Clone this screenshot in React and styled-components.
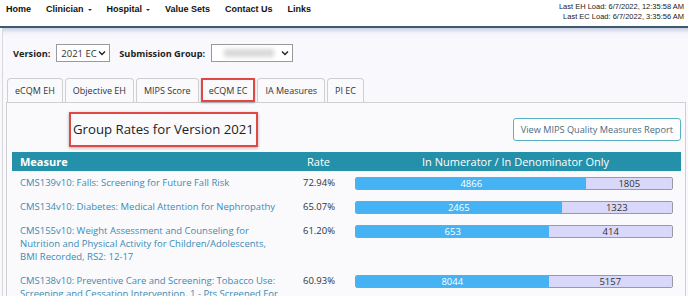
import React from 'react';
import styled, { createGlobalStyle } from 'styled-components';

const GlobalStyle = createGlobalStyle`
  body {
    margin: 0;
    background: #f9f9fd;
    font-family: 'Open Sans', 'Liberation Sans', sans-serif;
  }
`;

const NavBar = styled.div`
  display: flex;
  justify-content: space-between;
  align-items: flex-start;
  height: 26px;
  background: #ffffff;
  border-bottom: 2px solid #3e5a70;
  font-family: 'Liberation Sans', Arial, sans-serif;
`;

const NavLinks = styled.div`
  display: flex;
  gap: 15px;
  padding: 4px 0 0 6px;
`;

const NavLink = styled.span`
  display: flex;
  align-items: center;
  font-size: 9px;
  font-weight: bold;
  color: #111;
`;

const Caret = styled.span`
  width: 0;
  height: 0;
  margin: 1px 0 0 4px;
  border-left: 2.5px solid transparent;
  border-right: 2.5px solid transparent;
  border-top: 2.5px solid #333;
`;

const LoadInfo = styled.div`
  font-size: 7.5px;
  color: #222;
  text-align: right;
  line-height: 10px;
  padding: 2px 4px 0 0;
`;

const Main = styled.div`
  margin-left: 2px;
  border-left: 1px solid #d8d8dc;
  background: linear-gradient(#c8d0e2 0px, #f2f3fa 5px, #f9f9fd 10px);
  padding: 16px 2px 0 3px;
  min-height: 268px;
  box-sizing: border-box;
`;

const FilterRow = styled.div`
  display: flex;
  align-items: center;
  gap: 6px;
  padding-left: 7px;
  height: 18px;
`;

const Label = styled.span`
  font-size: 9.2px;
  font-weight: bold;
  color: #222;
`;

const Select = styled.div`
  display: flex;
  align-items: center;
  justify-content: space-between;
  box-sizing: border-box;
  width: ${p => p.w}px;
  height: 18px;
  border: 1px solid #9a9a9a;
  background: #fff;
  padding: 0 3px 0 4px;
  font-size: 9.5px;
  color: #333;
  white-space: nowrap;
  margin-right: ${p => p.mr || 0}px;
`;

const Blur = styled.span`
  width: 50px;
  height: 8px;
  margin-left: 8px;
  background: #d8d8d8;
  filter: blur(2px);
`;

const Chevron = () => (
  <svg width="8" height="6" viewBox="0 0 8 6">
    <path d="M1 1.5 L4 4.5 L7 1.5" fill="none" stroke="#222" strokeWidth="1.4" />
  </svg>
);

const Tabs = styled.div`
  display: flex;
  gap: 2px;
  margin-top: 16px;
  padding-left: 1px;
  position: relative;
  z-index: 1;
`;

const Tab = styled.div`
  box-sizing: border-box;
  height: 24px;
  padding: 0 ${p => (p.active ? 6 : 7)}px;
  display: flex;
  align-items: center;
  border: ${p => (p.active ? '2px solid #e04848' : '1px solid #cfcfcf')};
  border-bottom: ${p => (p.active ? '2px solid #e04848' : 'none')};
  border-radius: ${p => (p.active ? '0' : '4px 4px 0 0')};
  box-shadow: ${p => (p.active ? '0 1px 2px rgba(0,0,0,0.25)' : 'none')};
  background: #fafafd;
  font-size: 9px;
  color: #333;
`;

const Panel = styled.div`
  border: 1px solid #d0d0d0;
  border-bottom: none;
  background: #fafafd;
  padding: 9px 4px 0 5px;
  height: 200px;
`;

const TitleRow = styled.div`
  display: flex;
  justify-content: space-between;
  align-items: flex-start;
  height: 40px;
`;

const Title = styled.div`
  margin-left: 57px;
  border: 2px solid #e04848;
  box-shadow: 0 1px 3px rgba(0, 0, 0, 0.3);
  padding: 6px 2px 7px 2px;
  font-size: 13.2px;
  color: #222;
`;

const ReportButton = styled.div`
  margin: 6px 0 0 0;
  border: 1px solid #5bb1c4;
  border-radius: 3px;
  padding: 4px 7px;
  font-size: 9.2px;
  color: #4a6a7e;
  background: #fff;
`;

const Table = styled.div`
  display: grid;
  grid-template-columns: 288px 50px 1fr;
`;

const HeadCell = styled.div`
  background: #2590a9;
  color: #fff;
  font-size: 11px;
  font-weight: ${p => (p.bold ? 'bold' : 'normal')};
  height: 19px;
  line-height: 19px;
  padding-left: ${p => p.pl || 0}px;
  text-align: ${p => p.align || 'left'};
`;

const MeasureCell = styled.div`
  font-size: 9.5px;
  line-height: 13px;
  color: #3a8bb3;
  padding: 5px 20px 6px 8px;
`;

const RateCell = styled.div`
  font-size: 9.5px;
  line-height: 13px;
  color: #333;
  padding: 5px 0 0 3px;
`;

const BarCell = styled.div`
  padding: 6px 8px 0 5px;
`;

const Bar = styled.div`
  display: flex;
  height: 13px;
  box-sizing: border-box;
  border: 1px solid #9a9aa6;
  border-radius: 2px;
  overflow: hidden;
  font-size: 9.5px;
  line-height: 11px;
`;

const BarPart = styled.div`
  text-align: center;
  background: ${p => (p.num ? '#45b2f3' : '#d9d8fa')};
  color: ${p => (p.num ? '#fff' : '#333')};
`;

const rows = [
  { name: 'CMS139v10: Falls: Screening for Future Fall Risk', rate: '72.94%', num: 4866, den: 1805 },
  { name: 'CMS134v10: Diabetes: Medical Attention for Nephropathy', rate: '65.07%', num: 2465, den: 1323 },
  {
    name: 'CMS155v10: Weight Assessment and Counseling for Nutrition and Physical Activity for Children/Adolescents, BMI Recorded, RS2: 12-17',
    rate: '61.20%',
    num: 653,
    den: 414,
  },
  {
    name: 'CMS138v10: Preventive Care and Screening: Tobacco Use: Screening and Cessation Intervention, 1 - Pts Screened For Tobacco Use',
    rate: '60.93%',
    num: 8044,
    den: 5157,
  },
];

const tabs = ['eCQM EH', 'Objective EH', 'MIPS Score', 'eCQM EC', 'IA Measures', 'PI EC'];

export default function App() {
  return (
    <>
      <GlobalStyle />
      <NavBar>
        <NavLinks>
          <NavLink>Home</NavLink>
          <NavLink>Clinician<Caret /></NavLink>
          <NavLink>Hospital<Caret /></NavLink>
          <NavLink>Value Sets</NavLink>
          <NavLink>Contact Us</NavLink>
          <NavLink>Links</NavLink>
        </NavLinks>
        <LoadInfo>
          <div>Last EH Load: 6/7/2022, 12:35:58 AM</div>
          <div>Last EC Load: 6/7/2022, 3:35:56 AM</div>
        </LoadInfo>
      </NavBar>
      <Main>
        <FilterRow>
          <Label>Version:</Label>
          <Select w={54} mr={3}>
            <span>2021 EC</span>
            <Chevron />
          </Select>
          <Label>Submission Group:</Label>
          <Select w={82}>
            <Blur />
            <Chevron />
          </Select>
        </FilterRow>
        <Tabs>
          {tabs.map(t => (
            <Tab key={t} active={t === 'eCQM EC'}>
              {t}
            </Tab>
          ))}
        </Tabs>
        <Panel>
          <TitleRow>
            <Title>Group Rates for Version 2021</Title>
            <ReportButton>View MIPS Quality Measures Report</ReportButton>
          </TitleRow>
          <Table>
            <HeadCell bold pl={8}>Measure</HeadCell>
            <HeadCell pl={7}>Rate</HeadCell>
            <HeadCell align="center">In Numerator / In Denominator Only</HeadCell>
            {rows.map(r => {
              const pct = (r.num / (r.num + r.den)) * 100;
              return (
                <React.Fragment key={r.name}>
                  <MeasureCell>{r.name}</MeasureCell>
                  <RateCell>{r.rate}</RateCell>
                  <BarCell>
                    <Bar>
                      <BarPart num style={{ width: `${pct}%` }}>{r.num}</BarPart>
                      <BarPart style={{ flex: 1 }}>{r.den}</BarPart>
                    </Bar>
                  </BarCell>
                </React.Fragment>
              );
            })}
          </Table>
        </Panel>
      </Main>
    </>
  );
}
